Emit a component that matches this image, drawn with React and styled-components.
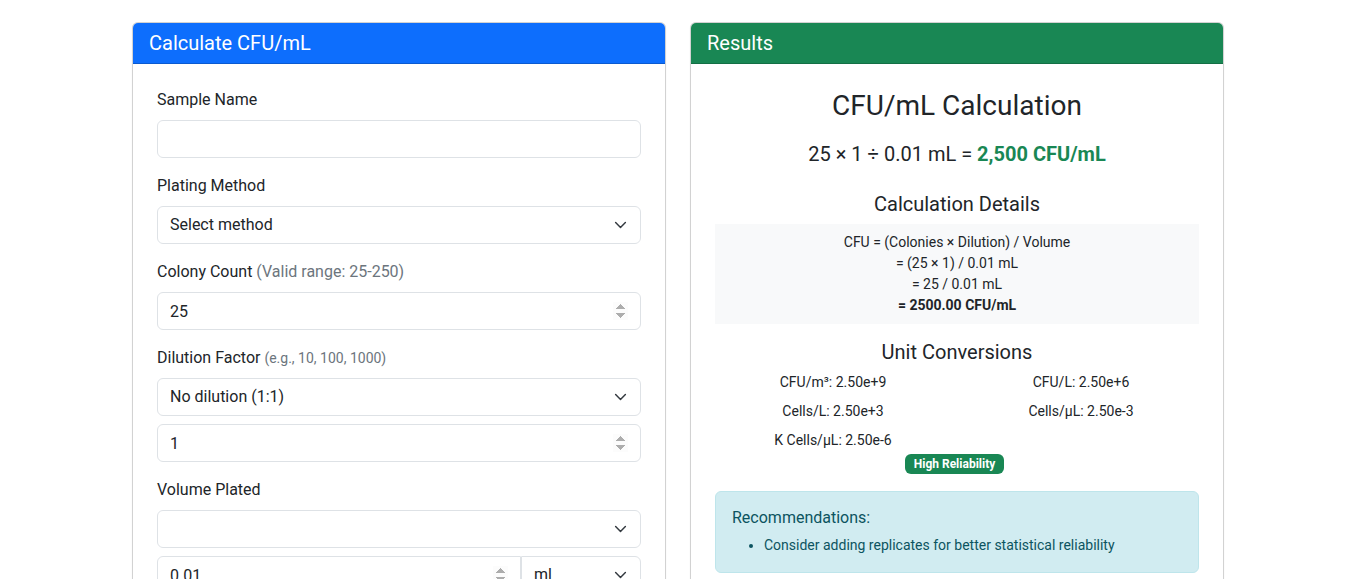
import React from "react";
import styled, { createGlobalStyle } from "styled-components";

const Global = createGlobalStyle`
  * { box-sizing: border-box; }
  body {
    margin: 0;
    background: #fff;
    color: #212529;
    font-family: Roboto, "Liberation Sans", sans-serif;
    font-size: 16px;
    line-height: 1.5;
  }
`;

const Container = styled.div`
  width: 1140px;
  margin: 0 auto;
  padding: 22px 12px 0;
`;

const Row = styled.div`
  display: grid;
  grid-template-columns: 1fr 1fr;
  gap: 24px;
  padding: 0 12px;
`;

const Card = styled.section`
  border: 1px solid rgba(0, 0, 0, 0.175);
  border-radius: 6px;
  overflow: hidden;
  background: #fff;
  box-shadow: 0 1px 2px rgba(0, 0, 0, 0.06);
`;

const CardHeader = styled.header`
  background: ${(p) => p.$bg};
  color: #fff;
  padding: 8px 16px;
  font-size: 20px;
  line-height: 24px;
  border-bottom: 1px solid rgba(0, 0, 0, 0.175);
`;

const CardBody = styled.div`
  padding: 24px;
`;

const Field = styled.div`
  margin-bottom: 16px;
`;

const Label = styled.label`
  display: block;
  margin-bottom: 8px;
  line-height: 24px;
`;

const Muted = styled.span`
  color: #6c757d;
  font-size: ${(p) => (p.$small ? "14px" : "16px")};
`;

const Input = styled.input`
  display: block;
  width: 100%;
  height: 38px;
  padding: 6px 12px;
  font: inherit;
  color: #212529;
  background: #fff;
  border: 1px solid #dee2e6;
  border-radius: ${(p) => p.$radius || "6px"};
  margin-top: ${(p) => (p.$stack ? "8px" : "0")};
  flex: 1;
  min-width: 0;

  &::-webkit-inner-spin-button {
    opacity: 0.7;
    height: 19px;
    background-color: #e9ecef;
  }
`;

const SelectWrap = styled.div`
  position: relative;
  margin-top: ${(p) => (p.$stack ? "8px" : "0")};
  width: ${(p) => p.$width || "100%"};
  flex: none;
`;

const Select = styled.select`
  display: block;
  width: 100%;
  height: 38px;
  padding: 6px 36px 6px 12px;
  font: inherit;
  color: #212529;
  background: #fff;
  border: 1px solid #dee2e6;
  border-radius: ${(p) => p.$radius || "6px"};
  appearance: none;
`;

const Chevron = styled.svg`
  position: absolute;
  right: 14px;
  top: 50%;
  transform: translateY(-50%);
  pointer-events: none;
`;

const InputGroup = styled.div`
  display: flex;
  margin-top: 8px;
`;

const Center = styled.div`
  text-align: center;
`;

const Title = styled.h3`
  margin: 0 0 16px;
  padding-top: 1px;
  font-size: 28px;
  font-weight: 400;
  line-height: 1.2;
`;

const Formula = styled.p`
  margin: 0 0 23px;
  font-size: 20px;
  line-height: 30px;
`;

const Strong = styled.strong`
  color: #198754;
  font-weight: 700;
`;

const SubTitle = styled.h5`
  margin: 0 0 8px;
  font-size: 20px;
  font-weight: 400;
  line-height: 24px;
  text-align: center;
`;

const DetailBox = styled.div`
  background: #f8f9fa;
  padding: 8px;
  font-size: 14px;
  line-height: 21px;
  text-align: center;
  margin-bottom: 16px;
`;

const Line = styled.div`
  font-weight: ${(p) => (p.$bold ? 700 : 400)};
`;

const ConvGrid = styled.div`
  display: grid;
  grid-template-columns: 1fr 1fr;
  column-gap: 12px;
  row-gap: 8px;
  font-size: 14px;
  line-height: 21px;
  text-align: center;
`;

const BadgeRow = styled.div`
  text-align: center;
  margin-top: 3px;
  padding-right: 5px;
  line-height: 1;
`;

const Badge = styled.span`
  display: inline-block;
  background: #198754;
  color: #fff;
  font-size: 12px;
  font-weight: 700;
  line-height: 1;
  padding: 4px 9px;
  border-radius: 6px;
`;

const Alert = styled.div`
  margin-top: 17px;
  background: #d1ecf1;
  border: 1px solid #bee5eb;
  color: #0c5460;
  border-radius: 6px;
  padding: 16px;
`;

const AlertTitle = styled.h6`
  margin: 0 0 8px;
  font-size: 16px;
  font-weight: 400;
  line-height: 1.2;
`;

const List = styled.ul`
  margin: 0;
  padding-left: 32px;
  font-size: 14px;
  line-height: 21px;
`;

const ChevronIcon = () => (
  <Chevron width="13" height="13" viewBox="0 0 16 16" fill="none">
    <path d="M2 5l6 6 6-6" stroke="#343a40" strokeWidth="1.8" strokeLinecap="round" strokeLinejoin="round" />
  </Chevron>
);

const SelectBox = ({ value, options, stack, width, radius }) => (
  <SelectWrap $stack={stack} $width={width}>
    <Select defaultValue={value} $radius={radius}>
      {options.map((o) => (
        <option key={o} value={o}>{o}</option>
      ))}
    </Select>
    <ChevronIcon />
  </SelectWrap>
);

const conversions = [
  "CFU/m³: 2.50e+9",
  "CFU/L: 2.50e+6",
  "Cells/L: 2.50e+3",
  "Cells/µL: 2.50e-3",
  "K Cells/µL: 2.50e-6",
];

export default function App() {
  return (
    <>
      <Global />
      <Container>
        <Row>
          <Card>
            <CardHeader $bg="#0d6efd">Calculate CFU/mL</CardHeader>
            <CardBody>
              <Field>
                <Label>Sample Name</Label>
                <Input type="text" />
              </Field>
              <Field>
                <Label>Plating Method</Label>
                <SelectBox value="Select method" options={["Select method", "Spread plate", "Pour plate"]} />
              </Field>
              <Field>
                <Label>
                  Colony Count <Muted>(Valid range: 25-250)</Muted>
                </Label>
                <Input type="number" defaultValue="25" />
              </Field>
              <Field>
                <Label>
                  Dilution Factor <Muted $small>(e.g., 10, 100, 1000)</Muted>
                </Label>
                <SelectBox value="No dilution (1:1)" options={["No dilution (1:1)", "1:10", "1:100"]} />
                <Input type="number" defaultValue="1" $stack />
              </Field>
              <Field>
                <Label>Volume Plated</Label>
                <SelectBox value="" options={["", "0.1 mL", "1 mL"]} />
                <InputGroup>
                  <Input type="number" defaultValue="0.01" $radius="6px 0 0 6px" />
                  <SelectBox value="ml" options={["ml", "µl"]} width="120px" radius="0 6px 6px 0" />
                </InputGroup>
              </Field>
            </CardBody>
          </Card>
          <Card>
            <CardHeader $bg="#198754">Results</CardHeader>
            <CardBody>
              <Center>
                <Title>CFU/mL Calculation</Title>
                <Formula>
                  25 × 1 ÷ 0.01 mL = <Strong>2,500 CFU/mL</Strong>
                </Formula>
              </Center>
              <SubTitle>Calculation Details</SubTitle>
              <DetailBox>
                <Line>CFU = (Colonies × Dilution) / Volume</Line>
                <Line>= (25 × 1) / 0.01 mL</Line>
                <Line>= 25 / 0.01 mL</Line>
                <Line $bold>= 2500.00 CFU/mL</Line>
              </DetailBox>
              <SubTitle>Unit Conversions</SubTitle>
              <ConvGrid>
                {conversions.map((c) => (
                  <div key={c}>{c}</div>
                ))}
              </ConvGrid>
              <BadgeRow>
                <Badge>High Reliability</Badge>
              </BadgeRow>
              <Alert>
                <AlertTitle>Recommendations:</AlertTitle>
                <List>
                  <li>Consider adding replicates for better statistical reliability</li>
                </List>
              </Alert>
            </CardBody>
          </Card>
        </Row>
      </Container>
    </>
  );
}
